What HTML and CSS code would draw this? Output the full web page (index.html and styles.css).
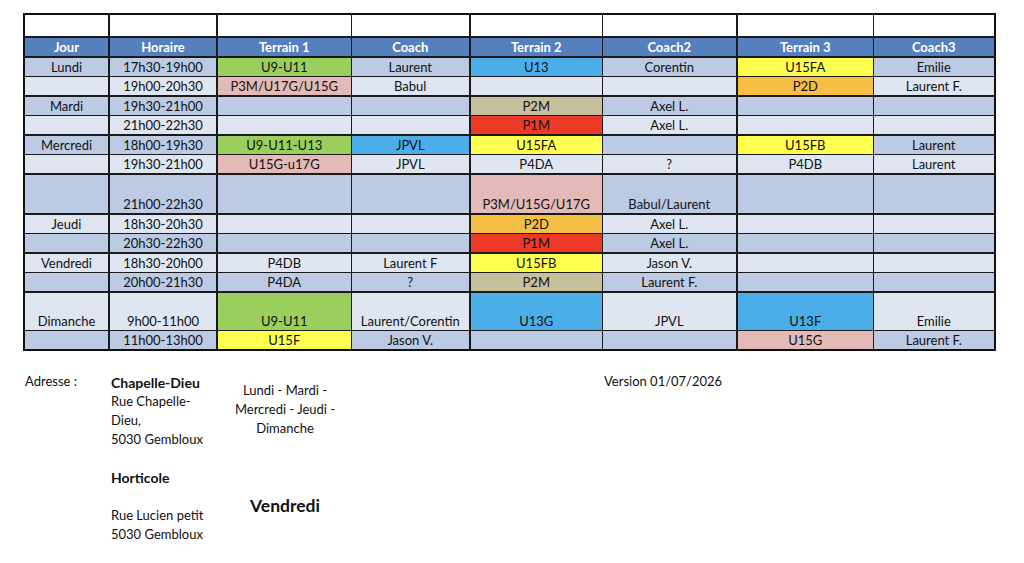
FILE: index.html
```html
<!DOCTYPE html>
<html lang="fr">
<head>
<meta charset="utf-8">
<title>Planning</title>
<link rel="stylesheet" href="styles.css">
</head>
<body>
<table class="sched">
  <colgroup>
    <col class="c1"><col class="c2"><col class="c3"><col class="c4"><col class="c5"><col class="c6"><col class="c7"><col class="c8">
  </colgroup>
  <tr class="blank"><td class="tk"></td><td class="tk"></td><td></td><td class="tk"></td><td></td><td class="tk"></td><td></td><td></td></tr>
  <tr class="head grp"><td class="tk">Jour</td><td class="tk">Horaire</td><td>Terrain 1</td><td class="tk">Coach</td><td>Terrain 2</td><td class="tk">Coach2</td><td>Terrain 3</td><td>Coach3</td></tr>

  <tr class="dk grp"><td class="tk">Lundi</td><td class="tk">17h30-19h00</td><td class="green">U9-U11</td><td class="tk">Laurent</td><td class="blue">U13</td><td class="tk">Corentin</td><td class="yellow">U15FA</td><td>Emilie</td></tr>
  <tr class="lt"><td class="tk"></td><td class="tk">19h00-20h30</td><td class="pink">P3M/U17G/U15G</td><td class="tk">Babul</td><td></td><td class="tk"></td><td class="orange">P2D</td><td>Laurent F.</td></tr>

  <tr class="dk grp"><td class="tk">Mardi</td><td class="tk">19h30-21h00</td><td></td><td class="tk"></td><td class="tan">P2M</td><td class="tk">Axel L.</td><td></td><td></td></tr>
  <tr class="lt"><td class="tk"></td><td class="tk">21h00-22h30</td><td></td><td class="tk"></td><td class="red">P1M</td><td class="tk">Axel L.</td><td></td><td></td></tr>

  <tr class="dk grp"><td class="tk">Mercredi</td><td class="tk">18h00-19h30</td><td class="green">U9-U11-U13</td><td class="tk blue">JPVL</td><td class="yellow">U15FA</td><td class="tk"></td><td class="yellow">U15FB</td><td>Laurent</td></tr>
  <tr class="lt"><td class="tk"></td><td class="tk">19h30-21h00</td><td class="pink">U15G-u17G</td><td class="tk">JPVL</td><td>P4DA</td><td class="tk">?</td><td>P4DB</td><td>Laurent</td></tr>
  <tr class="dk tall grp"><td class="tk"></td><td class="tk">21h00-22h30</td><td></td><td class="tk"></td><td class="pink">P3M/U15G/U17G</td><td class="tk">Babul/Laurent</td><td></td><td></td></tr>

  <tr class="lt grp"><td class="tk">Jeudi</td><td class="tk">18h30-20h30</td><td></td><td class="tk"></td><td class="orange">P2D</td><td class="tk">Axel L.</td><td></td><td></td></tr>
  <tr class="dk"><td class="tk"></td><td class="tk">20h30-22h30</td><td></td><td class="tk"></td><td class="red">P1M</td><td class="tk">Axel L.</td><td></td><td></td></tr>

  <tr class="lt grp"><td class="tk">Vendredi</td><td class="tk">18h30-20h00</td><td>P4DB</td><td class="tk">Laurent F</td><td class="yellow">U15FB</td><td class="tk">Jason V.</td><td></td><td></td></tr>
  <tr class="dk"><td class="tk"></td><td class="tk">20h00-21h30</td><td>P4DA</td><td class="tk">?</td><td class="tan">P2M</td><td class="tk">Laurent F.</td><td></td><td></td></tr>

  <tr class="lt tall2 grp"><td class="tk">Dimanche</td><td class="tk">9h00-11h00</td><td class="green">U9-U11</td><td class="tk">Laurent/Corentin</td><td class="blue">U13G</td><td class="tk">JPVL</td><td class="blue">U13F</td><td>Emilie</td></tr>
  <tr class="dk"><td class="tk"></td><td class="tk">11h00-13h00</td><td class="yellow">U15F</td><td class="tk">Jason V.</td><td></td><td class="tk"></td><td class="pink">U15G</td><td>Laurent F.</td></tr>
</table>

<div class="info">
  <div class="label">Adresse :</div>
  <div class="addr">
    <div class="ln b">Chapelle-Dieu</div>
    <div class="ln">Rue Chapelle-</div>
    <div class="ln">Dieu,</div>
    <div class="ln">5030 Gembloux</div>
    <div class="ln"></div>
    <div class="ln b">Horticole</div>
    <div class="ln"></div>
    <div class="ln">Rue Lucien petit</div>
    <div class="ln">5030 Gembloux</div>
  </div>
  <div class="days">
    <div class="ln">Lundi - Mardi -</div>
    <div class="ln">Mercredi - Jeudi -</div>
    <div class="ln">Dimanche</div>
    <div class="vend">Vendredi</div>
  </div>
  <div class="version">Version 01/07/2026</div>
</div>
</body>
</html>
```

FILE: styles.css
```css
html, body {
  margin: 0;
  padding: 0;
  background: #ffffff;
}
body {
  font-family: Lato, "Open Sans", "Liberation Sans", sans-serif;
  font-size: 13px;
  color: #111111;
}
.sched {
  margin: 13px 0 0 23px;
  border-collapse: collapse;
  table-layout: fixed;
  width: 971px;
  border: 2px solid #111111;
}
.c1 { width: 85px; }
.c2 { width: 108px; }
.c3 { width: 134px; }
.c4 { width: 119px; }
.c5 { width: 132px; }
.c6 { width: 135px; }
.c7 { width: 136px; }
.c8 { width: 122px; }

.sched td {
  border: 1px solid #1a1a1a;
  padding: 0;
  height: 18px;
  line-height: 18px;
  text-align: center;
  vertical-align: bottom;
  white-space: nowrap;
  overflow: hidden;
}
.sched td.tk {
  border-right-width: 2px;
}
.sched tr.grp td {
  border-top-width: 2px;
}
.sched tr.blank td {
  height: 21px;
  background: #ffffff;
  border-bottom-width: 2px;
}
.sched tr.head td {
  background: #5680bd;
  color: #ffffff;
  font-weight: 700;
  height: 18px;
}
.sched tr.tall td { height: 38px; }
.sched tr.tall2 td { height: 37px; }

.sched tr.dk td { background: #bccbe3; }
.sched tr.lt td { background: #dfe6f1; }

.sched tr td.green { background: #9bcf5d; }
.sched tr td.pink { background: #e3bab8; }
.sched tr td.blue { background: #4baee9; }
.sched tr td.tan { background: #c5bf9b; }
.sched tr td.red { background: #ec3a26; }
.sched tr td.yellow { background: #ffff4f; }
.sched tr td.orange { background: #f5bf45; }

.info {
  display: flex;
  align-items: flex-start;
  margin: 22px 0 0 25px;
}
.ln {
  height: 19px;
  line-height: 19px;
  white-space: nowrap;
}
.b {
  font-weight: 700;
  font-size: 14px;
}
.label {
  width: 86px;
}
.addr {
  width: 114px;
}
.days {
  width: 120px;
  text-align: center;
  padding-top: 8px;
}
.vend {
  margin-top: 57px;
  font-weight: 700;
  font-size: 17.5px;
  line-height: 22px;
}
.version {
  margin-left: 259px;
}
```
